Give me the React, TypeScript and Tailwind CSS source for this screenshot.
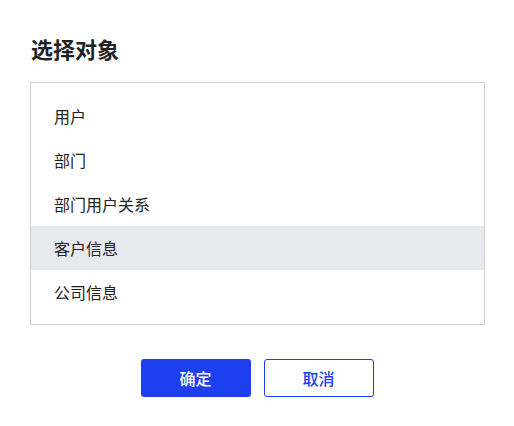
import React from "react";

const items = ["用户", "部门", "部门用户关系", "客户信息", "公司信息"];

export default function App() {
  const [selected, setSelected] = React.useState(3);

  return (
    <div
      className="w-[514px] h-[426px] bg-white px-[30px] pt-[36px]"
      style={{ fontFamily: '"Noto Sans CJK SC", "Noto Sans", sans-serif' }}
    >
      <h1 className="text-[22px] leading-[24px] font-bold text-[#222] pl-[1px]">选择对象</h1>

      <ul className="mt-[22px] w-[455px] h-[243px] border border-[#cfcfcf] py-[11px]">
        {items.map((item, i) => (
          <li
            key={item}
            onClick={() => setSelected(i)}
            className={`h-[44px] flex items-center pl-[23px] text-[16px] text-[#222] cursor-pointer ${
              i === selected ? "bg-[#e8e9ee]" : ""
            }`}
          >
            {item}
          </li>
        ))}
      </ul>

      <div className="mt-[34px] flex justify-center gap-[13px]">
        <button className="w-[110px] h-[38px] rounded-[3px] bg-[#1d3ff0] text-white text-[16px] font-medium">确定</button>
        <button className="w-[110px] h-[38px] rounded-[3px] border-[1.5px] border-[#1d3ff0] bg-white text-[#1d3ff0] text-[16px] font-medium">
          取消
        </button>
      </div>
    </div>
  );
}
